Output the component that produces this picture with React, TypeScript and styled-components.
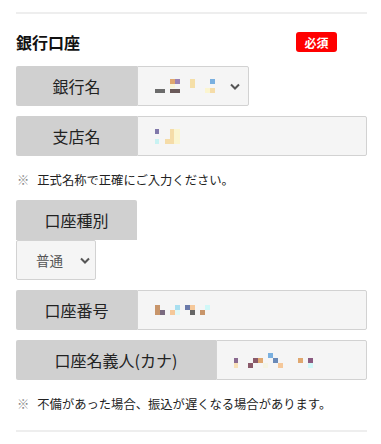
import React from 'react'
import styled, { createGlobalStyle } from 'styled-components'

const GlobalStyle = createGlobalStyle`
  html, body {
    margin: 0;
    padding: 0;
    background: #fff;
  }
  body {
    font-family: 'Noto Sans CJK JP', 'Noto Sans', sans-serif;
    color: #222;
  }
`

const Section = styled.section`
  box-sizing: border-box;
  width: 381px;
  padding: 12px 14px 0 16px;
`

const Rule = styled.hr`
  margin: 0;
  border: 0;
  height: 2px;
  background: #eeeeee;
`

const Header = styled.div`
  display: flex;
  align-items: center;
  justify-content: space-between;
  height: 20px;
  margin: 18px 30px 14px 0;
`

const Title = styled.h2`
  margin: 0;
  font-size: 16px;
  font-weight: 700;
  line-height: 20px;
  color: #111;
`

const Badge = styled.span`
  display: inline-flex;
  align-items: center;
  justify-content: center;
  width: 41px;
  height: 20px;
  border-radius: 3px;
  background: #ff0000;
  color: #fff;
  font-size: 12px;
  font-weight: 700;
`

const Row = styled.div<{ $gap?: number }>`
  display: flex;
  height: 40px;
  margin-bottom: ${p => p.$gap ?? 10}px;
`

const Label = styled.div<{ $width?: number }>`
  box-sizing: border-box;
  display: flex;
  align-items: center;
  justify-content: center;
  flex: 0 0 ${p => p.$width ?? 121}px;
  height: 40px;
  background: #d0d0d0;
  border-radius: 2px 0 0 2px;
  font-size: 16px;
  color: #222;
`

const Field = styled.div<{ $width?: number }>`
  box-sizing: border-box;
  display: flex;
  align-items: center;
  height: 40px;
  ${p => (p.$width ? `width: ${p.$width}px;` : 'flex: 1;')}
  padding: 0 8px 0 17px;
  background: #f5f5f5;
  border: 1px solid #d2d2d2;
  border-radius: 0 2px 2px 0;
`

const Select = styled(Field)`
  justify-content: space-between;
`

const StandaloneSelect = styled.div`
  box-sizing: border-box;
  display: flex;
  align-items: center;
  justify-content: space-between;
  width: 80px;
  height: 40px;
  margin-bottom: 10px;
  padding: 0 5px 0 19px;
  background: #f5f5f5;
  border: 1px solid #d2d2d2;
  border-radius: 2px;
  font-size: 13.5px;
  color: #555;
`

const StackLabel = styled(Label)`
  width: 121px;
  border-radius: 2px 2px 0 0;
`

const Note = styled.p<{ $after: number }>`
  display: flex;
  gap: 8px;
  margin: 15px 0 ${p => p.$after}px 1px;
  font-size: 12.3px;
  line-height: 18px;
  color: #222;

  &::before {
    content: '※';
    color: #888;
  }
`

type Px = [number, number, number, number, string]

const Mosaic = ({ cells, width, height }: { cells: Px[]; width: number; height: number }) => (
  <svg width={width} height={height} viewBox={`0 0 ${width} ${height}`}>
    {cells.map(([x, y, w, h, c], i) => (
      <rect key={i} x={x} y={y} width={w} height={h} fill={c} />
    ))}
  </svg>
)

const Chevron = () => (
  <svg width="10" height="7" viewBox="0 0 10 7">
    <polyline points="1,1.5 5,5.5 9,1.5" fill="none" stroke="#555" strokeWidth="2" />
  </svg>
)

// redacted values, as seen in the source capture
const bankCells: Px[] = [
  [0, 10, 10, 4, '#6b6b6b'],
  [15, 0, 5, 5, '#e0a870'],
  [20, 0, 5, 5, '#9a82b4'],
  [15, 5, 5, 4, '#f8f4d8'],
  [15, 10, 10, 4, '#6a5a5a'],
  [35, 0, 5, 9, '#f5dfa8'],
  [55, 0, 5, 5, '#7ab0e0'],
  [50, 9, 5, 5, '#fbf5d0'],
  [55, 9, 5, 5, '#f5dca8'],
]

const branchCells: Px[] = [
  [0, 0, 4, 5, '#8078aa'],
  [0, 10, 4, 5, '#c8f2f2'],
  [15, 0, 4, 15, '#f5dca8'],
  [10, 10, 5, 5, '#f5dca8'],
  [19, 0, 6, 15, '#fbf5d0'],
]

const numberCells: Px[] = [
  [0, 0, 5, 10, '#c8956a'],
  [5, 5, 5, 5, '#7a6a80'],
  [15, 5, 5, 5, '#f5c89a'],
  [20, 0, 5, 5, '#a8dff0'],
  [20, 5, 5, 5, '#e0f8f8'],
  [30, 0, 5, 5, '#6a7aaa'],
  [35, 0, 5, 5, '#f5c89a'],
  [35, 5, 5, 5, '#666'],
  [45, 5, 5, 5, '#c8956a'],
  [50, 0, 5, 5, '#d0f8f8'],
]

const kanaCells: Px[] = [
  [0, 5, 4, 5, '#8a6a90'],
  [0, 10, 4, 5, '#f8e0b8'],
  [14, 10, 5, 5, '#8a5a6a'],
  [19, 5, 5, 5, '#8a5a6a'],
  [24, 5, 5, 5, '#e0a870'],
  [29, 10, 5, 5, '#f4f4e4'],
  [34, 0, 5, 5, '#7ab0e0'],
  [39, 5, 5, 5, '#6a8ab8'],
  [44, 10, 5, 5, '#f5c89a'],
  [64, 5, 5, 5, '#e0a870'],
  [74, 5, 5, 5, '#8a5a80'],
  [74, 10, 5, 5, '#d0f8f8'],
]

export default function App() {
  return (
    <>
      <GlobalStyle />
      <Section>
        <Rule />
        <Header>
          <Title>銀行口座</Title>
          <Badge>必須</Badge>
        </Header>

        <Row>
          <Label>銀行名</Label>
          <Select $width={112}>
            <Mosaic cells={bankCells} width={60} height={14} />
            <Chevron />
          </Select>
        </Row>

        <Row $gap={0}>
          <Label>支店名</Label>
          <Field>
            <Mosaic cells={branchCells} width={25} height={15} />
          </Field>
        </Row>

        <Note $after={11}>正式名称で正確にご入力ください。</Note>

        <StackLabel>口座種別</StackLabel>
        <StandaloneSelect>
          普通
          <Chevron />
        </StandaloneSelect>

        <Row>
          <Label>口座番号</Label>
          <Field>
            <Mosaic cells={numberCells} width={55} height={10} />
          </Field>
        </Row>

        <Row $gap={0}>
          <Label $width={200}>口座名義人(カナ)</Label>
          <Field>
            <Mosaic cells={kanaCells} width={79} height={15} />
          </Field>
        </Row>

        <Note $after={17}>不備があった場合、振込が遅くなる場合があります。</Note>

        <Rule />
      </Section>
    </>
  )
}
